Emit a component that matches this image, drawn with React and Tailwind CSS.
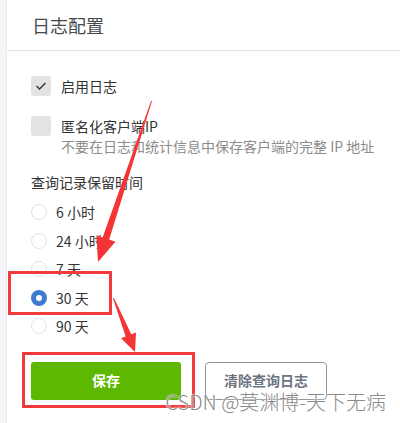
import { useState } from "react";

const retention = ["6 小时", "24 小时", "7 天", "30 天", "90 天"];

function Checkbox({ checked }) {
  return (
    <span className="w-5 h-5 rounded-[3px] bg-[#e3e3e3] flex items-center justify-center shrink-0">
      {checked && (
        <svg width="12" height="10" viewBox="0 0 12 10">
          <polyline points="1.5,5 4.5,8 10.5,2" fill="none" stroke="#333" strokeWidth="1.4" />
        </svg>
      )}
    </span>
  );
}

function Radio({ checked }) {
  return checked ? (
    <span className="w-4 h-4 rounded-full bg-[#3d7bd1] flex items-center justify-center shrink-0">
      <span className="w-1.5 h-1.5 rounded-full bg-white" />
    </span>
  ) : (
    <span className="w-4 h-4 rounded-full border border-[#dfe3ea] bg-white shrink-0" />
  );
}

export default function App() {
  const [selected] = useState("30 天");

  return (
    <div
      className="relative w-[400px] h-[423px] overflow-hidden bg-white flex text-[#333]"
      style={{ fontFamily: '"Noto Sans CJK SC", "Noto Sans", sans-serif' }}
    >
      {/* left gutter */}
      <div className="w-[7px] bg-[#f4f5f9] border-r border-[#e9eaee] shrink-0" />

      <div className="flex-1 flex flex-col">
        <div className="h-[51px] flex items-center pl-[25px] border-b border-[#e4e4e4]">
          <h2 className="text-[18px] text-[#454a50] leading-none">日志配置</h2>
        </div>

        <div className="pl-[24px] pt-[25px] flex flex-col text-[14px]">
          <label className="flex items-center gap-[10px] h-5">
            <Checkbox checked />
            <span className="leading-5">启用日志</span>
          </label>

          <label className="flex items-center gap-[10px] h-5 mt-5">
            <Checkbox />
            <span className="leading-5">匿名化客户端IP</span>
          </label>
          <p className="pl-[30px] leading-5 text-[#8c8c8c]">
            不要在日志和统计信息中保存客户端的完整 IP 地址
          </p>

          <p className="mt-4 leading-5">查询记录保留时间</p>

          <div className="mt-[6px] flex flex-col">
            {retention.map((r) => (
              <label key={r} className="flex items-center gap-[9px] h-[28.5px]">
                <Radio checked={r === selected} />
                <span className="leading-5">{r}</span>
              </label>
            ))}
          </div>

          <div className="mt-[21px] flex gap-6">
            <button className="w-[150px] h-[38px] rounded-[3px] bg-[#5cb800] text-white font-bold text-[14px]">
              保存
            </button>
            <button className="w-[122px] h-[38px] rounded-[4px] border border-[#8f969e] text-[#6b7480] font-bold text-[14px] bg-white">
              清除查询日志
            </button>
          </div>
        </div>
      </div>

      {/* annotation boxes */}
      <div className="absolute left-[8px] top-[271px] w-[104px] h-[44px] border-[3px] border-[#f23a3a]" />
      <div className="absolute left-[22px] top-[352px] w-[173px] h-[56px] border-[3px] border-[#f23a3a]" />

      {/* annotation arrows */}
      <svg className="absolute inset-0 pointer-events-none" width="400" height="423" viewBox="0 0 400 423">
        <polygon
          points="152,101 109.2,239.6 115.4,241.7 98,262 96.4,235.3 102.6,237.4 151,101"
          fill="#f53535"
        />
        <polygon
          points="114,298 131.3,334.2 136,332.4 135,352 121,338.2 125.7,336.4 113,298.5"
          fill="#f53535"
        />
      </svg>

      {/* watermark */}
      <div
        className="absolute right-[14px] top-[390px] text-[20px] leading-6 font-light text-[#8a8a8a]"
        style={{ textShadow: "0 0 2px #fff, 0 0 2px #fff" }}
      >
        CSDN @莫渊博-天下无病
      </div>
    </div>
  );
}
